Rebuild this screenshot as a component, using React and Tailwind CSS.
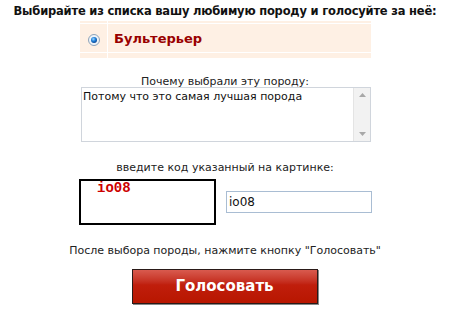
import { useState } from 'react'

function Radio() {
  return (
    <svg width="12" height="12" viewBox="0 0 12 12">
      <defs>
        <radialGradient id="rg" cx="0.4" cy="0.35" r="0.7">
          <stop offset="0" stopColor="#9fd8ff" />
          <stop offset="0.5" stopColor="#1e7fd8" />
          <stop offset="1" stopColor="#0b3f8a" />
        </radialGradient>
      </defs>
      <circle cx="6" cy="6" r="5.5" fill="#eef3f8" stroke="#8ea3b8" strokeWidth="1" />
      <circle cx="6" cy="6" r="3" fill="url(#rg)" />
    </svg>
  )
}

export default function App() {
  const [reason, setReason] = useState('Потому что это самая лучшая порода')
  const [code, setCode] = useState('io08')

  return (
    <div className="w-[450px] h-[312px] bg-white text-[#222] overflow-hidden" style={{ fontFamily: '"DejaVu Sans", Verdana, sans-serif' }}>
      <h1 className="m-0 pt-[3px] text-center whitespace-nowrap text-[11.5px] leading-[16px] tracking-[-0.2px] font-bold text-[#111]">
        Выбирайте из списка вашу любимую породу и голосуйте за неё:
      </h1>

      <div className="ml-[80px] mt-[2px] w-[291px] flex flex-col gap-px">
        <div className="flex gap-px h-[2px]">
          <div className="w-[27px] bg-[#fef0e4]" />
          <div className="flex-1 bg-[#fef0e4]" />
        </div>
        <div className="flex gap-px h-[28px]">
          <div className="w-[27px] bg-[#fef0e4] flex items-center justify-center pt-[3px]">
            <Radio />
          </div>
          <div className="flex-1 bg-[#fef0e4] flex items-center pl-[6px] pt-[2px]">
            <span className="text-[13px] font-bold text-[#990000]">Бультерьер</span>
          </div>
        </div>
        <div className="flex gap-px h-[5px]">
          <div className="w-[27px] bg-[#fef0e4]" />
          <div className="flex-1 bg-[#fef0e4]" />
        </div>
      </div>

      <p className="m-0 mt-[18px] text-center text-[11px] leading-[12px] text-[#222]">Почему выбрали эту породу:</p>

      <div className="ml-[81px] mt-[-1px] w-[290px] h-[55px] border border-[#d0d5dc] flex">
        <textarea
          value={reason}
          onChange={e => setReason(e.target.value)}
          className="flex-1 resize-none border-0 outline-none px-[1px] py-[2px] text-[11px] leading-[14px] text-[#111] overflow-hidden"
          style={{ fontFamily: '"DejaVu Sans", Verdana, sans-serif' }}
        />
        <div className="w-[17px] bg-[#f2f2f2] border-l border-[#e4e4e4] flex flex-col items-center justify-between py-[5px]">
          <svg width="7" height="4" viewBox="0 0 7 4"><path d="M3.5 0L7 4H0z" fill="#a8a8a8" /></svg>
          <svg width="7" height="4" viewBox="0 0 7 4"><path d="M0 0h7L3.5 4z" fill="#a8a8a8" /></svg>
        </div>
      </div>

      <p className="m-0 mt-[20px] text-center text-[11px] leading-[12px] text-[#222]">введите код указанный на картинке:</p>

      <div className="ml-[79px] mt-[5px] flex items-start gap-[10px]">
        <div className="w-[137px] h-[46px] border-2 border-black pl-[16px]">
          <span className="block text-[14px] leading-[14px] font-bold text-[#cc0000]" style={{ fontFamily: '"Liberation Mono", "Courier New", monospace' }}>io08</span>
        </div>
        <input
          value={code}
          onChange={e => setCode(e.target.value)}
          className="mt-[12px] w-[146px] h-[22px] border border-[#a9bdd3] px-[2px] text-[12px] text-[#111] outline-none"
          style={{ fontFamily: '"DejaVu Sans", Verdana, sans-serif' }}
        />
      </div>

      <p className="m-0 mt-[19px] text-center text-[11px] leading-[14px] text-[#222]">После выбора породы, нажмите кнопку "Голосовать"</p>

      <div className="flex justify-center mt-[11px]">
        <button className="ml-[-1px] w-[186px] h-[35px] border border-[#2a1a18] bg-gradient-to-b from-[#d85a4e] via-[#c01e0c] via-45% to-[#b81600] text-white text-[15px] font-bold shadow-[1px_1px_0_#888] cursor-pointer">
          Голосовать
        </button>
      </div>
    </div>
  )
}
